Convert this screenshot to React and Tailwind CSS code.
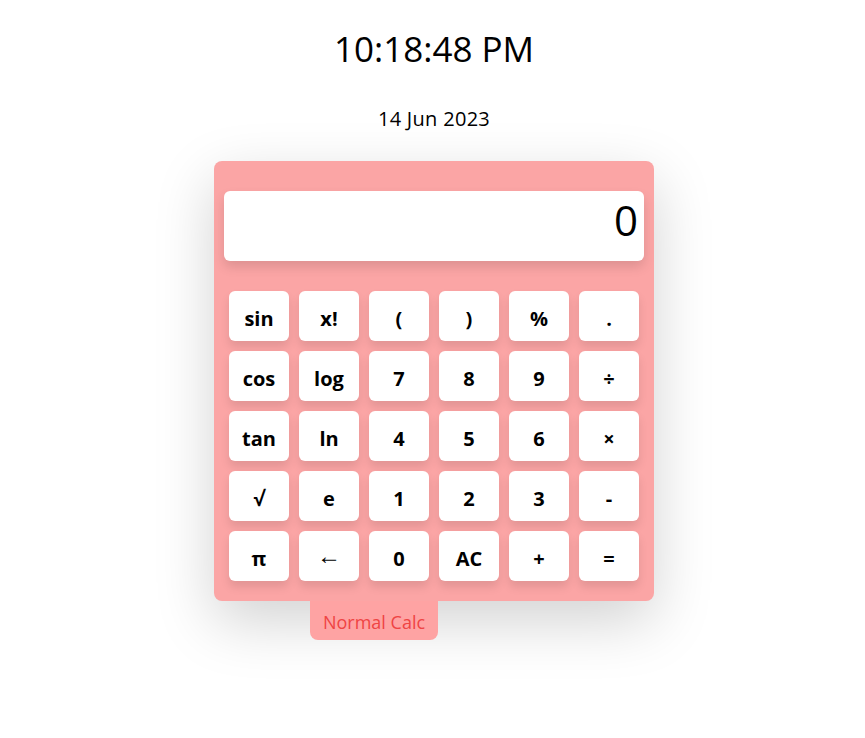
import React from "react";

const rows = [
  ["sin", "x!", "(", ")", "%", "."],
  ["cos", "log", "7", "8", "9", "÷"],
  ["tan", "ln", "4", "5", "6", "×"],
  ["√", "e", "1", "2", "3", "-"],
  ["π", "←", "0", "AC", "+", "="],
];

export default function App() {
  return (
    <div className="min-h-[738px] w-full bg-white flex flex-col items-center text-black" style={{ fontFamily: '"Open Sans", "Noto Sans", sans-serif' }}>
      <div className="mt-[25px] ml-[3px] text-[35px] leading-[48px]">10:18:48 PM</div>
      <div className="mt-[32px] ml-[3px] text-[20px] leading-[28px] tracking-[0.3px]">14 Jun 2023</div>
      <div className="mt-[28px] ml-[3px] flex flex-col items-center">
        <div className="w-[440px] rounded-lg bg-[#fba5a5] px-[10px] pt-[30px] pb-[20px] shadow-[0_20px_60px_rgba(0,0,0,0.18)]">
          <div className="h-[70px] rounded-md bg-white flex items-center justify-end pr-[6px] pb-[14px] text-[42px] shadow-[0_6px_12px_rgba(0,0,0,0.12)]">0</div>
          <div className="mt-[30px] px-[5px] grid grid-cols-6 gap-[10px]">
            {rows.flat().map((k, i) => (
              <button key={i} className={`h-[50px] rounded-md bg-white flex items-center justify-center shadow-[0_6px_10px_rgba(0,0,0,0.1)] ${k === "←" ? "text-[24px] font-normal pb-[2px]" : "text-[20px] font-bold pt-[5px]"}`}>
                {k}
              </button>
            ))}
          </div>
        </div>
        <div className="w-[440px] flex">
          <div className="ml-[96px] w-[128px] h-[39px] rounded-b-lg bg-[#fea3a3] text-[#ef4444] text-[18px] pt-[3px] flex items-center justify-center">Normal Calc</div>
        </div>
      </div>
    </div>
  );
}
